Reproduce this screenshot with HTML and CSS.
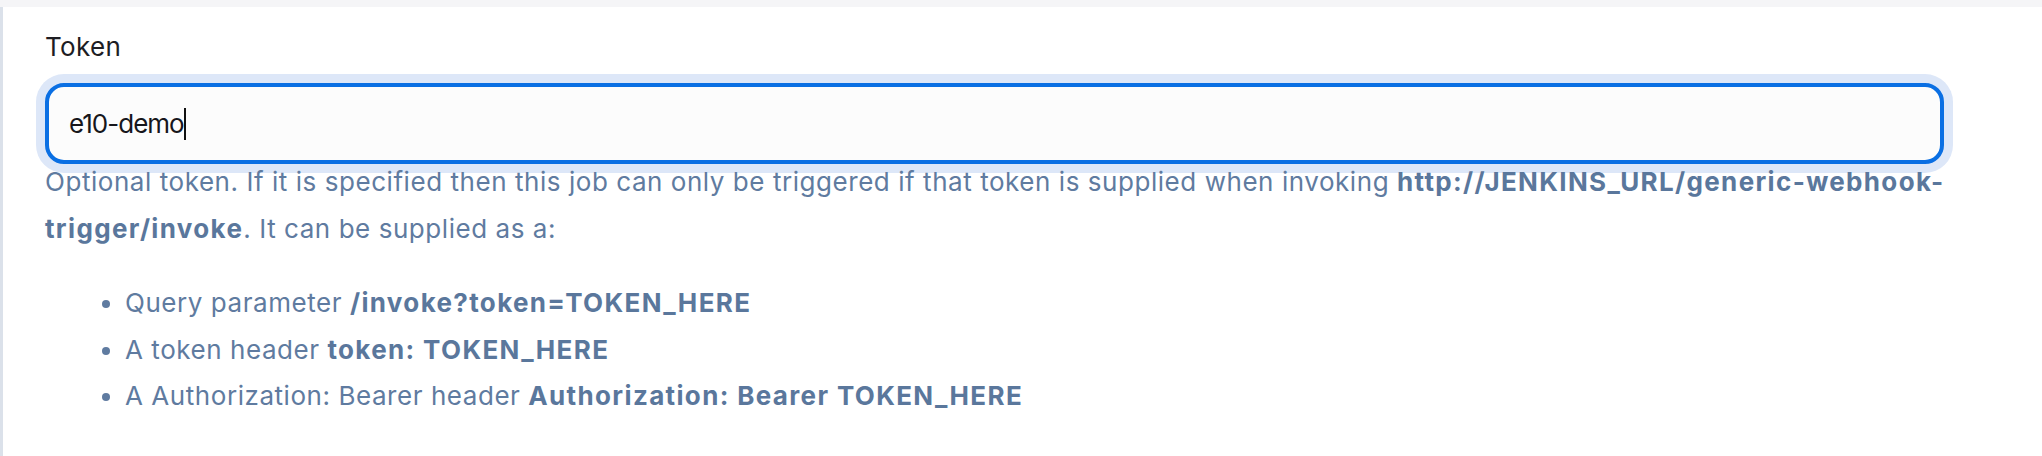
FILE: index.html
```html
<!DOCTYPE html>
<html lang="en">
<head>
<meta charset="utf-8">
<title>Token</title>
<link rel="stylesheet" href="styles.css">
</head>
<body>
<div class="topbar"></div>
<div class="section">
  <div class="label">Token</div>
  <div class="field"><span class="value">e10-demo</span><span class="caret"></span></div>
  <div class="help">
    <p class="help-text">Optional token. If it is specified then this job can only be triggered if that token is supplied when invoking <b>http://JENKINS_URL/generic-webhook-trigger/invoke</b>. It can be supplied as a:</p>
    <ul class="help-list">
      <li>Query parameter <b>/invoke?token=TOKEN_HERE</b></li>
      <li>A token header <b>token: TOKEN_HERE</b></li>
      <li>A Authorization: Bearer header <b>Authorization: Bearer TOKEN_HERE</b></li>
    </ul>
  </div>
</div>
</body>
</html>
```
FILE: styles.css
```css
html, body {
  margin: 0;
  padding: 0;
  background: #ffffff;
}
body {
  font-family: Inter, "Noto Sans", "Liberation Sans", sans-serif;
  width: 2042px;
  height: 456px;
  overflow: hidden;
}
.topbar {
  height: 7px;
  background: #f5f5f7;
}
.section {
  border-left: 3px solid #dbe1ea;
  padding: 22px 0 0 42px;
  height: 449px;
  box-sizing: border-box;
}
.label {
  font-size: 26px;
  line-height: 36px;
  color: #1d1d23;
  letter-spacing: 0.3px;
  margin-bottom: 18px;
}
.field {
  width: 1899px;
  height: 81px;
  box-sizing: border-box;
  border: 4px solid #0a6fe3;
  border-radius: 19px;
  background: #fcfcfc;
  box-shadow: 0 0 0 9px #dde7f8;
  display: flex;
  align-items: center;
  padding-left: 20px;
  font-size: 26px;
  letter-spacing: -1px;
  color: #16161b;
}
.caret {
  display: inline-block;
  width: 2px;
  height: 32px;
  background: #111;
}
.help {
  margin-top: -5px;
  color: #5f7ba0;
  font-size: 26px;
  line-height: 46.5px;
  letter-spacing: 0.55px;
}
.help-text {
  margin: 0;
  width: 1930px;
}
.help b {
  font-weight: 700;
  letter-spacing: 1.35px;
  color: #5a779c;
}
.help-list {
  margin: 28px 0 0 0;
  padding-left: 80px;
}
```
